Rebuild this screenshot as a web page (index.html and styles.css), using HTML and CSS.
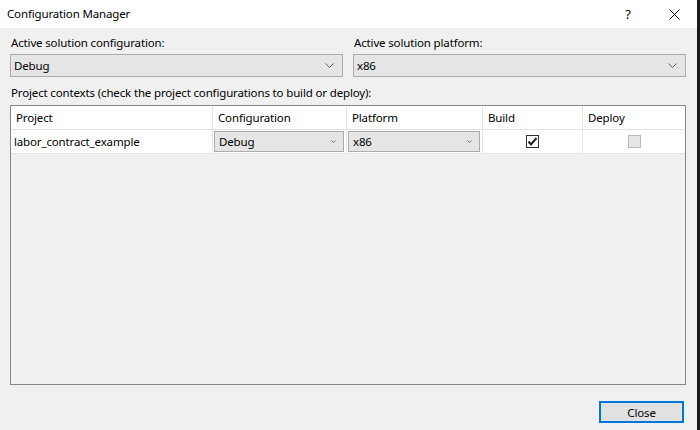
FILE: index.html
```html
<!DOCTYPE html>
<html lang="en">
<head>
    <meta charset="UTF-8">
    <title>Configuration Manager</title>
    <link rel="stylesheet" href="styles.css">
</head>
<body>
    <div class="dialog">
        <div class="titlebar">
            <div class="title">Configuration Manager</div>
            <div class="winbtn">?</div>
            <div class="winbtn">
                <svg width="11" height="11" viewBox="0 0 11 11"><path d="M0.5 0.5L10.5 10.5M10.5 0.5L0.5 10.5" stroke="#000" stroke-width="1" fill="none"/></svg>
            </div>
        </div>

        <div class="content">
            <div class="top-fields">
                <div class="field">
                    <div class="label">Active solution configuration:</div>
                    <div class="combo">
                        <span>Debug</span>
                        <svg class="arrow" width="9" height="5" viewBox="0 0 9 5"><path d="M0.5 0.5L4.5 4.5L8.5 0.5" stroke="#606060" fill="none"/></svg>
                    </div>
                </div>
                <div class="field">
                    <div class="label">Active solution platform:</div>
                    <div class="combo">
                        <span>x86</span>
                        <svg class="arrow" width="9" height="5" viewBox="0 0 9 5"><path d="M0.5 0.5L4.5 4.5L8.5 0.5" stroke="#606060" fill="none"/></svg>
                    </div>
                </div>
            </div>

            <div class="label contexts">Project contexts (check the project configurations to build or deploy):</div>

            <div class="grid">
                <div class="row head">
                    <div class="cell">Project</div>
                    <div class="cell">Configuration</div>
                    <div class="cell">Platform</div>
                    <div class="cell">Build</div>
                    <div class="cell">Deploy</div>
                </div>
                <div class="row">
                    <div class="cell">labor_contract_example</div>
                    <div class="cell pad">
                        <div class="combo small">
                            <span>Debug</span>
                            <svg class="arrow" width="5" height="3" viewBox="0 0 5 3"><path d="M0.5 0.5L2.5 2.5L4.5 0.5" stroke="#707070" fill="none"/></svg>
                        </div>
                    </div>
                    <div class="cell pad">
                        <div class="combo small">
                            <span>x86</span>
                            <svg class="arrow" width="5" height="3" viewBox="0 0 5 3"><path d="M0.5 0.5L2.5 2.5L4.5 0.5" stroke="#707070" fill="none"/></svg>
                        </div>
                    </div>
                    <div class="cell center">
                        <div class="check">
                            <svg width="11" height="11" viewBox="0 0 11 11"><path d="M1.5 5.5L4 8.5L9.5 2" stroke="#222" stroke-width="2" fill="none"/></svg>
                        </div>
                    </div>
                    <div class="cell center">
                        <div class="check disabled"></div>
                    </div>
                </div>
            </div>

            <div class="footer">
                <div class="button">Close</div>
            </div>
        </div>
    </div>
</body>
</html>
```

FILE: styles.css
```css
body {
    margin: 0;
    background: #1b1b1f;
    font-family: "Noto Sans", "Open Sans", sans-serif;
    font-size: 11.5px;
    letter-spacing: -0.15px;
    color: #000;
}
.dialog {
    width: 697px;
    height: 430px;
    background: #f0f0f0;
    display: flex;
    flex-direction: column;
}
.titlebar {
    height: 28px;
    background: #fff;
    display: flex;
    align-items: center;
}
.title {
    flex: 1;
    padding-left: 7px;
    padding-bottom: 2px;
}
.winbtn {
    width: 46px;
    height: 28px;
    display: flex;
    align-items: center;
    justify-content: center;
    font-size: 13px;
}
.content {
    flex: 1;
    padding: 7px 11px 0 10px;
    display: flex;
    flex-direction: column;
}
.top-fields {
    display: grid;
    grid-template-columns: 1fr 1fr;
    column-gap: 10px;
}
.label {
    height: 16px;
    line-height: 16px;
    padding-left: 1px;
    white-space: nowrap;
}
.combo {
    margin-top: 3px;
    height: 23px;
    box-sizing: border-box;
    border: 1px solid #acacac;
    background: #e5e5e5;
    display: flex;
    align-items: center;
    padding: 0 8px 0 3px;
}
.combo span {
    flex: 1;
}
.combo.small {
    margin: 0;
    height: 21px;
    padding: 0 7px 0 4px;
}
.contexts {
    margin-top: 8px;
}
.grid {
    margin-top: 4px;
    height: 280px;
    box-sizing: border-box;
    border: 1px solid #828790;
    background: #f0f0f0;
}
.row {
    display: grid;
    grid-template-columns: 202px 134px 136px 100px 1fr;
    background: #fff;
    height: 23px;
    border-bottom: 1px solid #e5e5e5;
}
.cell {
    border-right: 1px solid #e5e5e5;
    display: flex;
    align-items: center;
    padding-left: 5px;
    white-space: nowrap;
}
.cell:last-child {
    border-right: none;
}
.row .cell:first-child {
    padding-left: 3px;
}
.row.head .cell:first-child {
    padding-left: 5px;
}
.cell.pad {
    padding: 1px 2px 1px 1px;
    display: block;
}
.cell.center {
    justify-content: center;
    padding-left: 0;
}
.check {
    width: 13px;
    height: 13px;
    box-sizing: border-box;
    border: 1px solid #333;
    background: #fff;
    display: flex;
    align-items: center;
    justify-content: center;
}
.check.disabled {
    border-color: #bcbcbc;
    background: #e6e6e6;
}
.footer {
    display: flex;
    justify-content: flex-end;
    padding: 16px 2px 0 0;
}
.button {
    width: 85px;
    height: 22px;
    box-sizing: border-box;
    border: 2px solid #0078d7;
    background: #e1e1e1;
    display: flex;
    align-items: center;
    justify-content: center;
}
```
